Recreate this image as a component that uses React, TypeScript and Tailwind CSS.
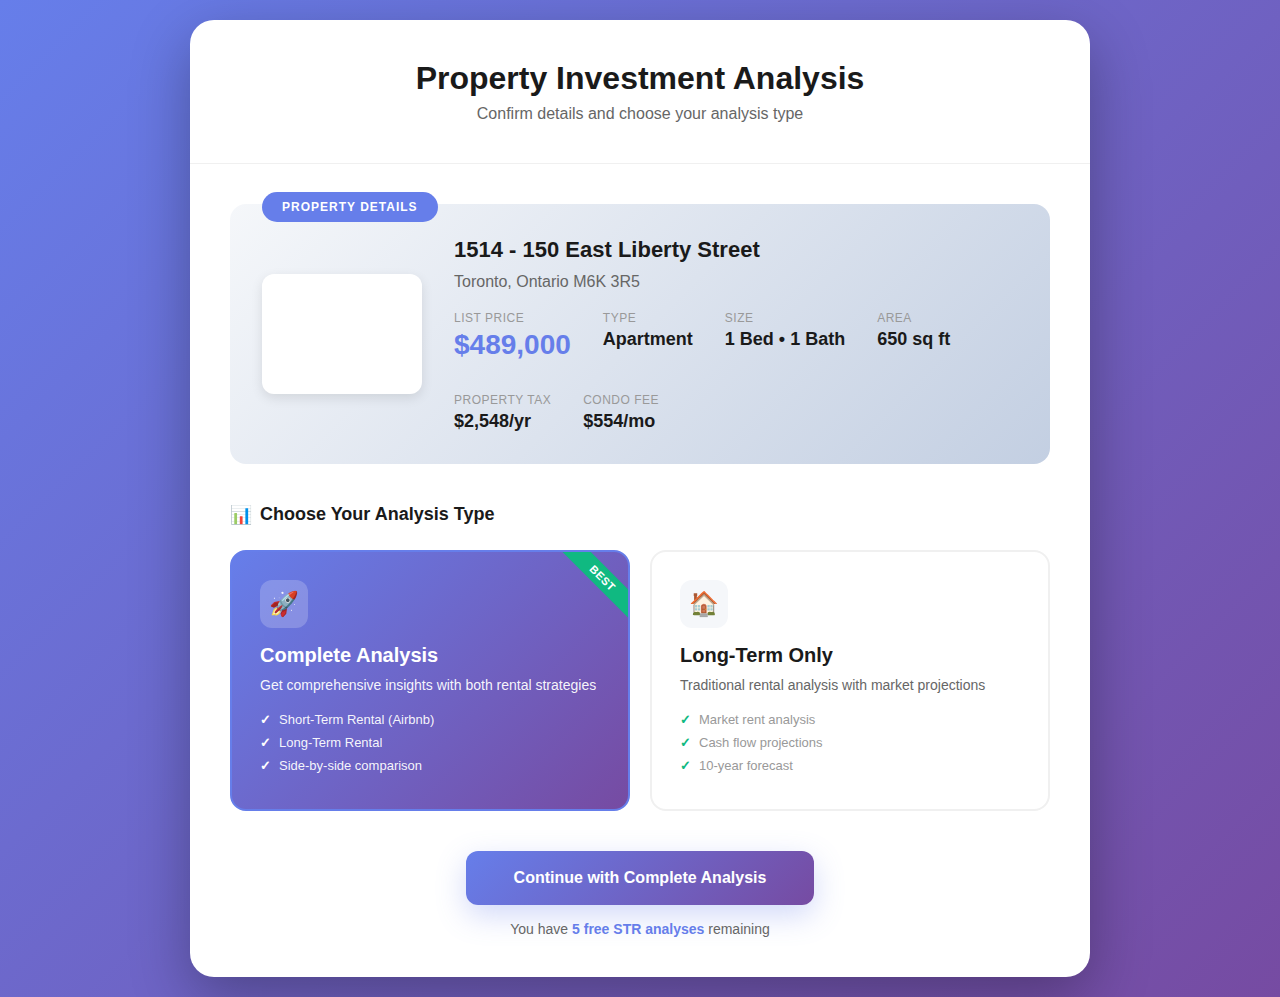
import { useState } from "react";

const facts = [
  { label: "List Price", value: "$489,000", highlight: true },
  { label: "Type", value: "Apartment" },
  { label: "Size", value: "1 Bed • 1 Bath" },
  { label: "Area", value: "650 sq ft" },
  { label: "Property Tax", value: "$2,548/yr" },
  { label: "Condo Fee", value: "$554/mo" },
];

const plans = [
  {
    id: "complete",
    icon: "🚀",
    title: "Complete Analysis",
    description: "Get comprehensive insights with both rental strategies",
    features: ["Short-Term Rental (Airbnb)", "Long-Term Rental", "Side-by-side comparison"],
    best: true,
  },
  {
    id: "long-term",
    icon: "🏠",
    title: "Long-Term Only",
    description: "Traditional rental analysis with market projections",
    features: ["Market rent analysis", "Cash flow projections", "10-year forecast"],
    best: false,
  },
];

type Plan = (typeof plans)[number];

function PlanCard({ plan, selected, onSelect }: { plan: Plan; selected: boolean; onSelect: () => void }) {
  return (
    <button
      type="button"
      aria-pressed={selected}
      onClick={onSelect}
      className={`relative flex cursor-pointer flex-col items-start overflow-hidden rounded-2xl border-2 p-7 pb-9 text-left ${
        selected
          ? "border-[#667eea] bg-linear-[135deg,#667eea_0%,#764ba2_100%] text-white"
          : "border-[#f0f0f0] bg-white text-[#1a1a1a]"
      }`}
    >
      {plan.best && (
        <span className="absolute top-4 -right-[30px] rotate-45 bg-[#10b981] px-10 py-1 text-[11px] leading-3 font-bold tracking-[0.5px] text-white">
          BEST
        </span>
      )}
      <span
        className={`mb-4 flex size-12 items-center justify-center rounded-xl text-2xl ${
          selected ? "bg-white/20" : "bg-[#f5f7fa]"
        }`}
      >
        {plan.icon}
      </span>
      <span className="mb-2 text-xl leading-[23px] font-bold">{plan.title}</span>
      <span className={`mb-4 text-sm leading-[21px] ${selected ? "text-white/95" : "text-[#666]"}`}>
        {plan.description}
      </span>
      <ul className={`flex flex-col gap-2 text-[13px] leading-[15px] ${selected ? "text-white/95" : "text-[#999]"}`}>
        {plan.features.map((feature) => (
          <li key={feature} className="flex items-center gap-2">
            <span className={`font-bold ${selected ? "text-white" : "text-[#10b981]"}`}>✓</span>
            {feature}
          </li>
        ))}
      </ul>
    </button>
  );
}

export default function App() {
  const [selectedId, setSelectedId] = useState("complete");
  const selectedPlan = plans.find((plan) => plan.id === selectedId) ?? plans[0];

  return (
    <div className="min-h-screen bg-linear-[135deg,#667eea_0%,#764ba2_100%] p-5 font-['Liberation_Sans',Arial,sans-serif] text-[#1a1a1a]">
      <main className="mx-auto max-w-[900px] overflow-hidden rounded-3xl bg-white shadow-[0_20px_60px_rgba(0,0,0,0.3)]">
        <header className="border-b border-[#f0f0f0] p-10 text-center">
          <h1 className="mb-2 text-[32px] leading-[37px] font-bold">Property Investment Analysis</h1>
          <p className="text-base leading-[18px] text-[#666]">Confirm details and choose your analysis type</p>
        </header>

        <div className="p-10">
          <section
            aria-label="Property details"
            className="relative mb-10 flex items-center gap-8 rounded-2xl bg-linear-[135deg,#f5f7fa_0%,#c3cfe2_100%] p-8"
          >
            <span className="absolute -top-3 left-8 rounded-full bg-[#667eea] px-5 py-2 text-xs leading-[14px] font-bold tracking-[1px] text-white">
              PROPERTY DETAILS
            </span>
            <div className="h-[120px] w-40 shrink-0 rounded-xl bg-white shadow-[0_4px_12px_rgba(0,0,0,0.1)]" />
            <div className="min-w-0 flex-1">
              <h2 className="mb-[10px] text-[22px] leading-[27px] font-bold">1514 - 150 East Liberty Street</h2>
              <p className="mb-5 text-base leading-[18px] text-[#666]">Toronto, Ontario M6K 3R5</p>
              <dl className="flex flex-wrap gap-8">
                {facts.map((fact) => (
                  <div key={fact.label} className="flex flex-col gap-1">
                    <dt className="text-xs leading-[14px] tracking-[0.5px] text-[#999] uppercase">{fact.label}</dt>
                    <dd
                      className={
                        fact.highlight
                          ? "text-[28px] leading-8 font-bold text-[#667eea]"
                          : "text-lg leading-[21px] font-bold"
                      }
                    >
                      {fact.value}
                    </dd>
                  </div>
                ))}
              </dl>
            </div>
          </section>

          <section aria-label="Analysis type" className="mb-10">
            <h2 className="mb-6 flex items-start gap-2 text-lg leading-5 font-bold">
              <span className="leading-[22px]">📊</span>
              Choose Your Analysis Type
            </h2>
            <div className="grid grid-cols-1 gap-5 md:grid-cols-2">
              {plans.map((plan) => (
                <PlanCard
                  key={plan.id}
                  plan={plan}
                  selected={plan.id === selectedId}
                  onSelect={() => setSelectedId(plan.id)}
                />
              ))}
            </div>
          </section>

          <div className="flex flex-col items-center gap-4 text-center">
            <button
              type="button"
              className="cursor-pointer rounded-xl bg-linear-[135deg,#667eea_0%,#764ba2_100%] px-12 py-[18px] text-base leading-[18px] font-bold text-white shadow-[0_10px_30px_rgba(102,126,234,0.3)]"
            >
              Continue with {selectedPlan.title}
            </button>
            <p className="text-sm leading-4 text-[#666]">
              You have <strong className="font-bold text-[#667eea]">5 free STR analyses</strong> remaining
            </p>
          </div>
        </div>
      </main>
    </div>
  );
}
